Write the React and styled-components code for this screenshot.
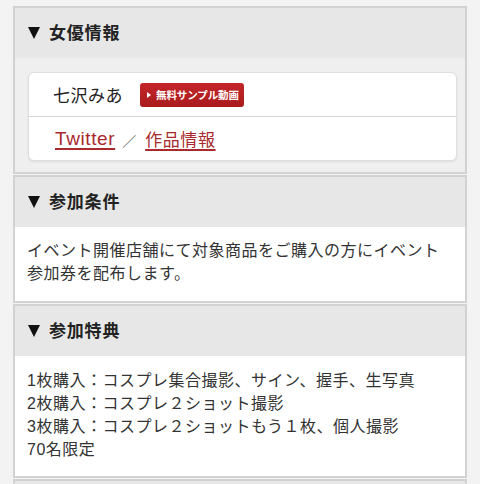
import styled, { createGlobalStyle } from "styled-components";

const GlobalStyle = createGlobalStyle`
  html, body {
    margin: 0;
    padding: 0;
    background: #f3f3f3;
  }
  body {
    font-family: "Liberation Sans", "Noto Sans CJK JP", sans-serif;
    color: #333;
  }
`;

const perks = [
  "1枚購入：コスプレ集合撮影、サイン、握手、生写真",
  "2枚購入：コスプレ２ショット撮影",
  "3枚購入：コスプレ２ショットもう１枚、個人撮影",
  "70名限定",
];

function App() {
  return (
    <Page>
      <GlobalStyle />
      <Section>
        <Header>女優情報</Header>
        <GrayBody>
          <Card>
            <CardRow>
              <Name>七沢みあ</Name>
              <Badge>
                <BadgeArrow />
                無料サンプル動画
              </Badge>
            </CardRow>
            <CardRow>
              <Link href="#" $size={19}>Twitter</Link>
              <Slash>／</Slash>
              <Link href="#" $size={17}>作品情報</Link>
            </CardRow>
          </Card>
        </GrayBody>
      </Section>
      <Section>
        <Header>参加条件</Header>
        <Body $top={12} $bottom={16}>
          イベント開催店舗にて対象商品をご購入の方にイベント
          <br />
          参加券を配布します。
        </Body>
      </Section>
      <Section>
        <Header>参加特典</Header>
        <Body $top={13} $bottom={15}>
          {perks.map((line) => (
            <div key={line}>{line}</div>
          ))}
        </Body>
      </Section>
      <Section>
        <Header />
      </Section>
    </Page>
  );
}

const Page = styled.div`
  padding: 6px 13px 0 13px;
  display: flex;
  flex-direction: column;
  gap: 1px;
`;

const Section = styled.section`
  border: 2px solid #d2d2d2;
  box-shadow: inset 0 0 0 1px #e0e0e0;
  background: #e7e7e7;
`;

const Header = styled.h2`
  margin: 0;
  height: 50px;
  box-sizing: border-box;
  padding: 0 0 3px 13px;
  display: flex;
  align-items: center;
  font-family: "Noto Sans CJK JP", sans-serif;
  font-size: 17px;
  font-weight: 700;
  color: #222;
  background: #e7e7e7;
  letter-spacing: 0.8px;

  &:not(:empty)::before {
    content: "";
    width: 0;
    height: 0;
    border-left: 6.5px solid transparent;
    border-right: 6.5px solid transparent;
    border-top: 12px solid #111;
    margin: 2px 9px 0 0;
  }
`;

const GrayBody = styled.div`
  background: #efefef;
  padding: 14px 8px 11px 13px;
`;

const Card = styled.div`
  background: #fff;
  border: 1px solid #dedede;
  border-radius: 6px;
  box-shadow: 0 1px 2px rgba(0, 0, 0, 0.08);
`;

const CardRow = styled.div`
  height: 43px;
  display: flex;
  align-items: center;
  padding-left: 24px;

  & + & {
    border-top: 1px solid #d6d6d6;
  }
`;

const Name = styled.span`
  font-family: "Noto Sans CJK JP", sans-serif;
  font-size: 17px;
  color: #222;
  margin-right: 17px;
  letter-spacing: 0.5px;
`;

const Badge = styled.span`
  display: inline-flex;
  align-items: center;
  height: 24px;
  padding: 0 5px 0 7px;
  border-radius: 3px;
  background: linear-gradient(#c4262a, #a91a1c);
  color: #fff;
  font-family: "Noto Sans CJK JP", sans-serif;
  font-size: 10.5px;
  font-weight: 700;
  letter-spacing: -0.1px;
`;

const BadgeArrow = styled.span`
  width: 0;
  height: 0;
  border-top: 3px solid transparent;
  border-bottom: 3px solid transparent;
  border-left: 4px solid #fff;
  margin-right: 5px;
`;

const Link = styled.a`
  font-size: ${({ $size }) => $size}px;
  color: #a82a2c;
  text-decoration: underline;
  text-decoration-thickness: 1.5px;
  text-underline-offset: 3px;
  letter-spacing: 0.6px;
  padding-left: 2px;
`;

const Slash = styled.span`
  font-family: "Noto Sans CJK JP", sans-serif;
  font-size: 14px;
  color: #666;
  margin: 2px 7px 0 7px;
`;

const Body = styled.div`
  background: #fff;
  padding: ${({ $top }) => $top}px 12px ${({ $bottom }) => $bottom}px 12px;
  font-size: 16px;
  line-height: 23px;
  color: #333;
  letter-spacing: 0.5px;
`;

export default App;
